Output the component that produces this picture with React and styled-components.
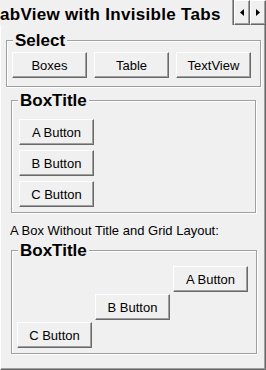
import React from 'react'
import styled, { createGlobalStyle } from 'styled-components'

const GlobalStyle = createGlobalStyle`
	html, body {
		margin: 0;
		padding: 0;
		background: #f0f0f0;
		font-family: 'Liberation Sans', Arial, sans-serif;
		color: #000;
	}
`

const Window = styled.div`
	width: 266px;
	height: 370px;
	display: flex;
	flex-direction: column;
	overflow: hidden;
`

const TabBar = styled.div`
	display: flex;
	height: 25px;
	flex: none;
`

const Tab = styled.div`
	flex: 1;
	min-width: 0;
	padding-top: 5px;
	font-size: 17px;
	font-weight: bold;
	line-height: 19px;
	letter-spacing: 0.3px;
	white-space: nowrap;
	overflow: hidden;
	border-right: 1px solid #696969;
	box-shadow: inset -1px 0 #a0a0a0;
`

const ArrowButton = styled.button`
	width: 16px;
	height: 25px;
	padding: 0;
	margin: 0;
	display: flex;
	align-items: center;
	justify-content: center;
	background: #f0f0f0;
	border: 1px solid;
	border-color: #fff #696969 #696969 #fff;
	box-shadow: inset -1px -1px #a0a0a0;
`

const Panel = styled.div`
	flex: 1;
	display: flex;
	flex-direction: column;
	padding: 6px 4px 0 5px;
	border-left: 1px solid #fff;
	border-right: 1px solid #696969;
	border-bottom: 1px solid #696969;
	box-shadow: inset -1px -1px #a0a0a0;
`

const Group = styled.fieldset`
	margin: ${p => p.$margin || '0'};
	padding: ${p => p.$pad};
	min-width: 0;
	border: 1px solid #a0a0a0;
	box-shadow: 1px 1px 0 #fff, inset 1px 1px 0 #fff;
`

const Legend = styled.legend`
	margin-left: ${p => 6 - p.$padLeft}px;
	padding: 0 2px;
	font-size: 17px;
	font-weight: bold;
	line-height: 19px;
	background: #f0f0f0;
`

const SelectRow = styled.div`
	display: grid;
	grid-template-columns: repeat(3, 75px);
	column-gap: 7px;
`

const ButtonColumn = styled.div`
	display: flex;
	flex-direction: column;
	align-items: flex-start;
	gap: 5px;
`

const StairGrid = styled.div`
	display: grid;
	grid-template-columns: repeat(3, 75px);
	grid-auto-rows: 26px;
	column-gap: 3px;
	row-gap: 2px;
`

const Button = styled.button`
	width: 75px;
	height: 26px;
	margin: 0;
	padding: 2px 0 0;
	grid-column: ${p => p.$col || 'auto'};
	grid-row: ${p => p.$row || 'auto'};
	font-family: 'Liberation Sans', Arial, sans-serif;
	font-size: 13px;
	line-height: 16px;
	color: #000;
	background: #f0f0f0;
	border: 1px solid;
	border-color: #fff #696969 #696969 #fff;
	box-shadow: inset -1px -1px #a0a0a0;
`

const Label = styled.div`
	margin: 10px 0 2px 4px;
	font-size: 13px;
	line-height: 16px;
`

const Arrow = ({ dir }) => (
	<svg width='4' height='7' viewBox='0 0 4 7'>
		{dir === 'left'
			? <polygon points='4,0 4,7 0,3.5' fill='#000' />
			: <polygon points='0,0 0,7 4,3.5' fill='#000' />}
	</svg>
)

const App = () => {
	return (
		<Window>
			<GlobalStyle />
			<TabBar>
				<Tab>abView with Invisible Tabs</Tab>
				<ArrowButton><Arrow dir='left' /></ArrowButton>
				<ArrowButton><Arrow dir='right' /></ArrowButton>
			</TabBar>
			<Panel>
				<Group $pad='2px 0 8px 5px'>
					<Legend $padLeft={5}>Select</Legend>
					<SelectRow>
						<Button>Boxes</Button>
						<Button>Table</Button>
						<Button>TextView</Button>
					</SelectRow>
				</Group>
				<Group $margin='4px 5px 0 5px' $pad='9px 0 5px 7px'>
					<Legend $padLeft={7}>BoxTitle</Legend>
					<ButtonColumn>
						<Button>A Button</Button>
						<Button>B Button</Button>
						<Button>C Button</Button>
					</ButtonColumn>
				</Group>
				<Label>A Box Without Title and Grid Layout:</Label>
				<Group $margin='0 4px 0 5px' $pad='6px 0 5px 5px'>
					<Legend $padLeft={5}>BoxTitle</Legend>
					<StairGrid>
						<Button $col={3} $row={1}>A Button</Button>
						<Button $col={2} $row={2}>B Button</Button>
						<Button $col={1} $row={3}>C Button</Button>
					</StairGrid>
				</Group>
			</Panel>
		</Window>
	)
}

export default App
